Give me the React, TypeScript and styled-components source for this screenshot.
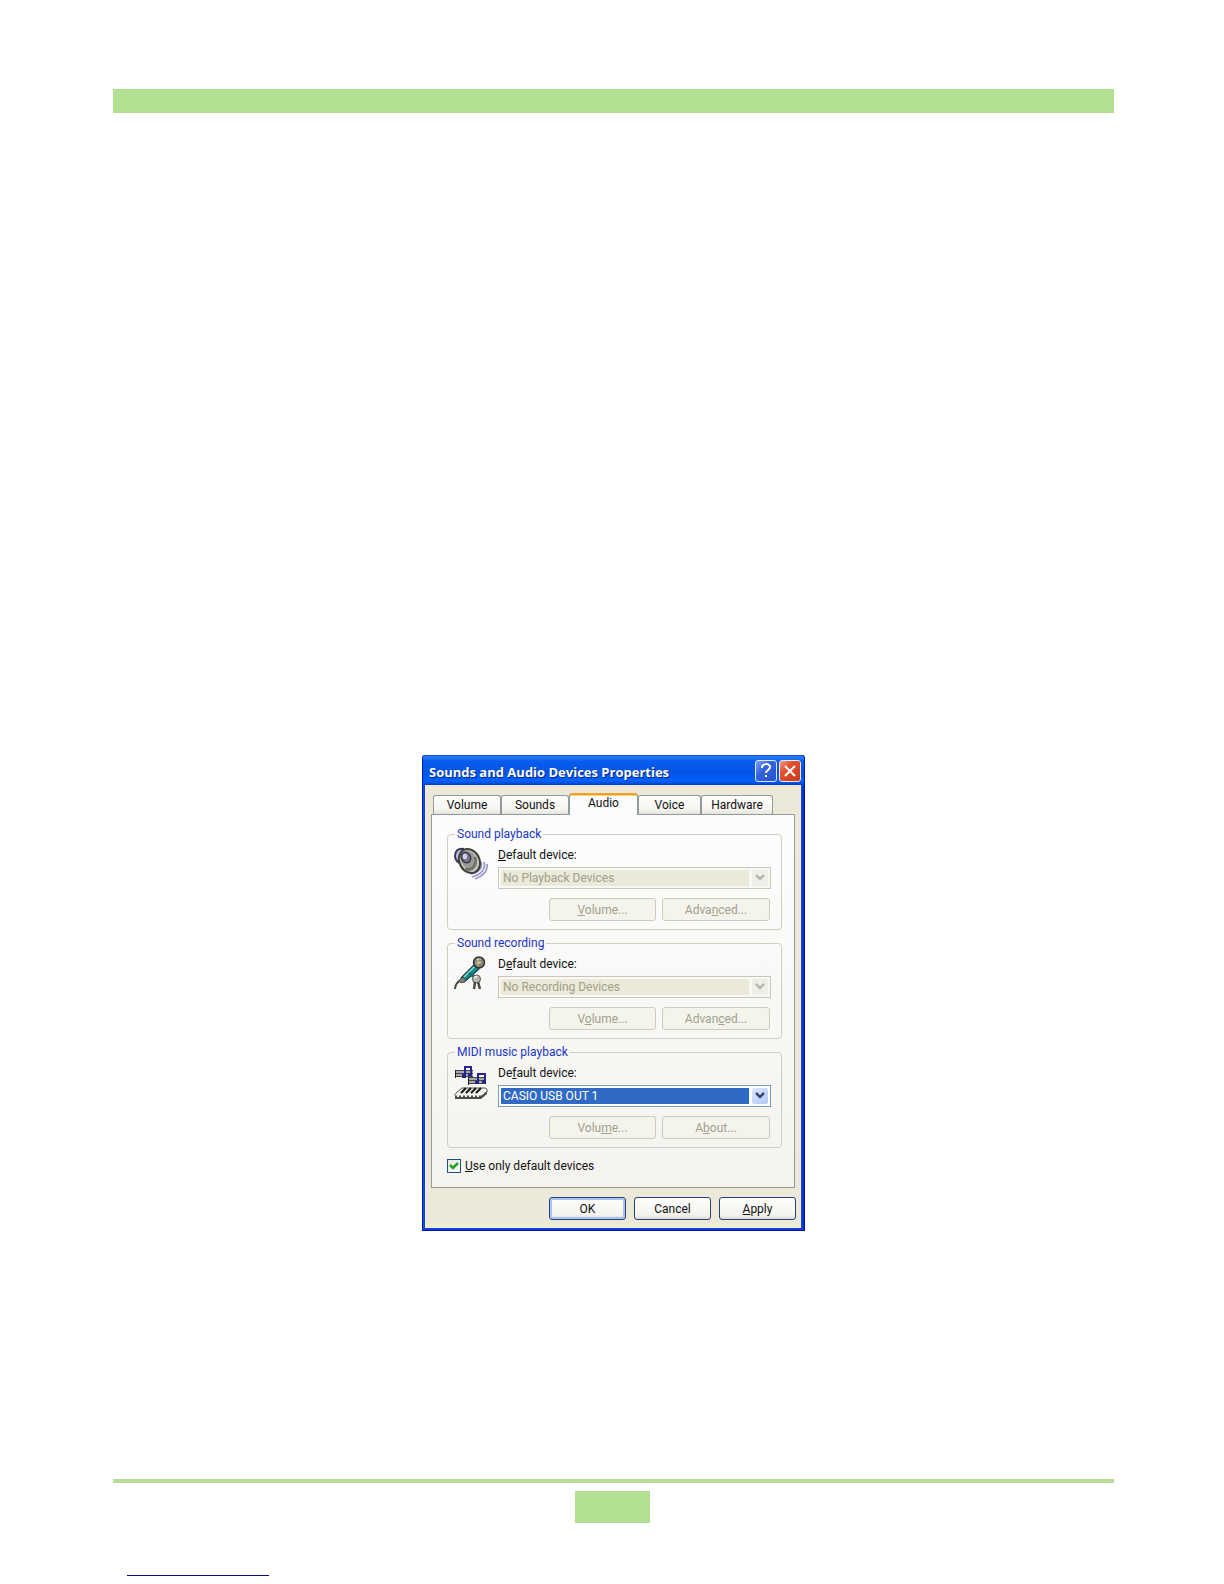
import React, { useState } from "react";
import styled, { createGlobalStyle, css } from "styled-components";

const GlobalStyle = createGlobalStyle`
  *, *::before, *::after { box-sizing: border-box; }
  body {
    margin: 0;
    background: #fff;
    color: #111;
    font: 12px/16px Roboto, "Liberation Sans", Arial, sans-serif;
  }
  button, select, input { font: inherit; }
`;

const Page = styled.div`
  min-height: 100vh;
  display: flex;
  flex-direction: column;
  padding: 89px 110px 8px 113px;
`;

const HeaderBand = styled.header`
  height: 24px;
  background: #b2e093;
`;

const Content = styled.main`
  flex: 1;
  display: flex;
  justify-content: center;
  align-items: flex-start;
  padding: 642px 0 248px;
`;

const Footer = styled.footer`
  display: flex;
  flex-direction: column;
  align-items: center;
  border-top: 4px solid #b9dd97;
  padding: 8px 2px 0 0;
`;

const PageNumber = styled.div`
  width: 75px;
  height: 32px;
  background: #b2e093;
`;

const FooterLink = styled.a`
  align-self: flex-start;
  width: 142px;
  height: 17px;
  margin: 36px 0 0 14px;
  border-bottom: 1px solid #0c0c86;
`;

const Dialog = styled.section`
  width: 383px;
  border: solid #0019a8;
  border-width: 0 1px 1px;
  border-radius: 3px 3px 0 0;
  background: #0a3fdc;
  box-shadow: inset 1px 0 #1550e8, inset -1px 0 #0a2bc0;
`;

const TitleBar = styled.header`
  height: 30px;
  display: flex;
  align-items: center;
  gap: 2px;
  padding: 2px 3px 0 6px;
  border-radius: 3px 3px 0 0;
  background: linear-gradient(#0a50d0 0, #2b80ff 2px, #0a5cf0 6px, #0054e3 18px, #0561fa 26px, #003fc4 30px);
`;

const Title = styled.h1`
  flex: 1;
  margin: 0;
  padding-top: 2px;
  color: #fff;
  font: 700 13px/20px "Open Sans", "Noto Sans", sans-serif;
  text-shadow: 1px 1px #0a2a8a;
  white-space: nowrap;
`;

const CaptionButton = styled.button<{ $close?: boolean }>`
  width: 22px;
  height: 22px;
  display: grid;
  place-items: center;
  padding: 0;
  border: 1px solid #dfe8fb;
  border-radius: 3px;
  background: ${(p) =>
    p.$close
      ? "linear-gradient(135deg, #f0a088, #e0512d 35%, #c83a16)"
      : "linear-gradient(135deg, #7ea2f2, #3464dc 40%, #2450cc)"};
`;

const DialogBody = styled.div`
  margin: 0 3px 2px 2px;
  padding: 8px 5px 7px;
  border: 1px solid #f5f1dc;
  border-top: 0;
  background: #ece9d8;
`;

const TabList = styled.div`
  height: 21px;
  display: flex;
  align-items: flex-end;
  padding-left: 2px;
`;

const Tab = styled.button<{ $width: number; $active?: boolean }>`
  width: ${(p) => p.$width}px;
  height: 19px;
  padding: 0;
  border: 1px solid #919b9c;
  border-bottom: 0;
  border-radius: 3px 3px 0 0;
  background: linear-gradient(#fff, #f6f5f0 70%, #e6e5dc);
  color: #111;
  line-height: 18px;
  ${(p) =>
    p.$active &&
    css`
      height: 22px;
      margin-bottom: -1px;
      padding-bottom: 4px;
      border-top: 2px solid #efa02c;
      background: linear-gradient(#ffd070 1px, #fcfcfe 1px);
      line-height: 16px;
    `}
`;

const Panel = styled.div`
  height: 374px;
  padding: 12px 12px 13px 15px;
  border: 1px solid #919b9c;
  background: linear-gradient(#fdfdfe, #f4f3ee);
`;

const Groups = styled.div`
  display: grid;
  gap: 6px;
`;

const Group = styled.fieldset`
  min-width: 0;
  height: 103px;
  margin: 0;
  padding: 0 10px 0 6px;
  border: 1px solid #cfcfc0;
  border-radius: 4px;
`;

const GroupTitle = styled.legend`
  margin-left: 1px;
  padding: 0 2px;
  color: #1a35c8;
  line-height: 14px;
`;

const GroupContent = styled.div`
  display: grid;
  grid-template-columns: 34px 1fr;
  column-gap: 10px;
  padding-top: 6px;
`;

const Fields = styled.div`
  display: flex;
  flex-direction: column;
`;

const FieldLabel = styled.label`
  margin-bottom: 4px;
`;

const Combo = styled.div<{ $disabled: boolean }>`
  height: 22px;
  display: flex;
  gap: 3px;
  padding: 2px;
  border: 1px solid ${(p) => (p.$disabled ? "#c9c7ba" : "#7f9db9")};
  background: ${(p) => (p.$disabled ? "#f8f8f4" : "#fff")};
`;

const ComboSelect = styled.select`
  flex: 1;
  min-width: 0;
  height: 16px;
  padding: 0 2px;
  border: 0;
  border-radius: 0;
  outline: 0;
  appearance: none;
  background: #316ac5;
  color: #fff;
  line-height: 16px;
  &:disabled {
    background: #ebe9d8;
    color: #a19f8d;
    opacity: 1;
  }
`;

const ComboArrow = styled.span<{ $disabled: boolean }>`
  width: 16px;
  display: grid;
  place-items: center;
  border-radius: 2px;
  color: ${(p) => (p.$disabled ? "#b9b8ae" : "#3a4a72")};
  background: ${(p) => (p.$disabled ? "#efeee8" : "linear-gradient(135deg, #dde7fd, #b3c8f6)")};
`;

const ButtonRow = styled.div`
  display: grid;
  grid-template-columns: 107px 108px;
  justify-content: end;
  gap: 6px;
  margin: 9px 1px 0 0;
`;

const PushButton = styled.button<{ $primary?: boolean }>`
  height: 23px;
  padding: 0;
  border: 1px solid #24437c;
  border-radius: 3px;
  background: linear-gradient(#fff, #f4f3ee 80%, #dedbd0);
  color: #111;
  line-height: 18px;
  box-shadow: ${(p) => (p.$primary ? "inset 0 0 0 2px #a9c3f0" : "none")};
  &:disabled {
    border-color: #cdcbbd;
    background: #f5f4ec;
    color: #a19f8d;
  }
`;

const CheckRow = styled.label`
  display: flex;
  align-items: center;
  gap: 4px;
  margin-top: 10px;
`;

const CheckMark = styled.span`
  display: grid;
  width: 14px;
  height: 14px;
  > * { grid-area: 1 / 1; }
  svg { pointer-events: none; }
`;

const CheckInput = styled.input`
  appearance: none;
  width: 14px;
  height: 14px;
  margin: 0;
  border: 1px solid #1c5180;
  background: linear-gradient(135deg, #e4e4dc, #fff);
  &:not(:checked) + svg { visibility: hidden; }
`;

const Actions = styled.div`
  display: grid;
  grid-template-columns: repeat(3, 77px);
  justify-content: end;
  gap: 8px;
  margin: 9px -1px 0 0;
`;

function SpeakerIcon() {
  return (
    <svg width="34" height="34" viewBox="0 0 34 34" aria-hidden="true">
      <path d="M27 15c2 6-2 10-10 12M30 15c2 7-2 12-12 15M33 17c1 7-4 12-12 15" fill="none" stroke="#9f9dc8" strokeWidth="1.8" />
      <path d="M10 2C4 1 1 4 1 9c0 4 3 7 6 7" fill="#c2c1d0" stroke="#34345c" strokeWidth="2" />
      <ellipse cx="15.5" cy="14" rx="10" ry="12.5" transform="rotate(-28 15.5 14)" fill="#c6c5bb" stroke="#3e3e3a" strokeWidth="2" />
      <ellipse cx="14.5" cy="12.5" rx="7.5" ry="9.5" transform="rotate(-28 14.5 12.500)" fill="#9d9c96" />
      <path d="M11 22c8 2 12-4 10-12" fill="none" stroke="#74736d" strokeWidth="3" />
      <ellipse cx="12" cy="10.500" rx="4.500" ry="5.500" transform="rotate(-28 12 10.500)" fill="#77768c" stroke="#3a3948" strokeWidth="1.5" />
      <ellipse cx="11" cy="9.500" rx="2.200" ry="2.800" fill="#d2d1e6" />
    </svg>
  );
}

function MicrophoneIcon() {
  return (
    <svg width="34" height="34" viewBox="0 0 34 34" aria-hidden="true">
      <path d="M1 33c0-5 3-8 8-10" fill="none" stroke="#44443f" strokeWidth="2" />
      <path d="M7 22l14-14 4 5-15 13z" fill="#168f8d" stroke="#153c3f" strokeWidth="1.2" />
      <path d="M10 21L21 10" stroke="#82e2dc" strokeWidth="1.5" />
      <path d="M5 25l4-4 3 4-5 2z" fill="#85857c" stroke="#4d4d48" />
      <circle cx="25" cy="6.500" r="5.500" fill="#858277" stroke="#34322f" strokeWidth="1.5" />
      <path d="M22 4l5-1M22 7l6-1M24 2v8" stroke="#c6c4b4" />
      <path d="M25 5l2 2-3 1z" fill="#e8d641" />
      <path d="M15 17l4 3 4 1" fill="none" stroke="#15716f" strokeWidth="3" />
      <circle cx="22.500" cy="23" r="4" fill="#b8b7af" stroke="#5b5a55" />
      <path d="M21 26l-1 7M24 26l2 7" stroke="#4b4a46" strokeWidth="2.500" />
      <path d="M20 22l3-2" stroke="#fff" strokeWidth="1.5" />
    </svg>
  );
}

function MidiIcon() {
  return (
    <svg width="34" height="34" viewBox="0 0 34 34" aria-hidden="true">
      <path d="M1 5h18v7H1zM14 12h18v6H14z" fill="#a9a9ac" />
      <path d="M1 5.500h18M1 8.500h18M1 11.500h18M14 12.500h18M14 15.500h18M14 18.500h18" stroke="#45454c" />
      <path d="M1.500 5v8M14.500 12v8M31.500 12v7" stroke="#222" />
      <path d="M11 11V2h6v7M24 17V9h7v7" fill="none" stroke="#25238e" strokeWidth="2" />
      <path d="M8 9h4v4H8zM14 8h4v3h-4zM21 16h4v3h-4zM28 15h4v3h-4z" fill="#25238e" />
      <path d="M8 23h22c3 0 4 2 3 4l-5 4H2c-2 0-1-2 0-3z" fill="#f4f4f0" stroke="#55554f" />
      <path d="M1 31h26l6-5v3l-6 5H1z" fill="#4c4c46" />
      <path d="M12 23l-5 5M17 23l-5 5M22 23l-5 5M27 23l-5 5" stroke="#1d1d1b" strokeWidth="2.200" />
      <path d="M4 30v2M8 30v2M12 30v2M16 30v2M20 30v2M24 30v2" stroke="#f2f2ec" strokeWidth="2" />
    </svg>
  );
}

function Mnemonic({ text, at }: { text: string; at: number }) {
  return (
    <>
      {text.slice(0, at)}
      <u>{text[at]}</u>
      {text.slice(at + 1)}
    </>
  );
}

interface DeviceGroupProps {
  id: string;
  title: string;
  icon: React.ReactNode;
  labelKey: number;
  device: string;
  enabled?: boolean;
  volumeKey: number;
  second: string;
  secondKey: number;
}

function DeviceGroup({ id, title, icon, labelKey, device, enabled = false, volumeKey, second, secondKey }: DeviceGroupProps) {
  return (
    <Group>
      <GroupTitle>{title}</GroupTitle>
      <GroupContent>
        {icon}
        <Fields>
          <FieldLabel htmlFor={id}>
            <Mnemonic text="Default device:" at={labelKey} />
          </FieldLabel>
          <Combo $disabled={!enabled}>
            <ComboSelect id={id} disabled={!enabled}>
              <option>{device}</option>
            </ComboSelect>
            <ComboArrow $disabled={!enabled}>
              <svg width="10" height="8" viewBox="0 0 10 8" aria-hidden="true">
                <path d="M1 1l4 4 4-4" fill="none" stroke="currentColor" strokeWidth="2.5" />
              </svg>
            </ComboArrow>
          </Combo>
          <ButtonRow>
            <PushButton disabled>
              <Mnemonic text="Volume..." at={volumeKey} />
            </PushButton>
            <PushButton disabled>
              <Mnemonic text={second} at={secondKey} />
            </PushButton>
          </ButtonRow>
        </Fields>
      </GroupContent>
    </Group>
  );
}

const TABS = [
  { name: "Volume", width: 68 },
  { name: "Sounds", width: 68 },
  { name: "Audio", width: 69 },
  { name: "Voice", width: 63 },
  { name: "Hardware", width: 72 },
];

export default function App() {
  const [onlyDefault, setOnlyDefault] = useState(true);
  return (
    <>
      <GlobalStyle />
      <Page>
        <HeaderBand />
        <Content>
          <Dialog role="dialog" aria-labelledby="dialog-title">
            <TitleBar>
              <Title id="dialog-title">Sounds and Audio Devices Properties</Title>
              <CaptionButton aria-label="Help">
                <svg width="14" height="16" viewBox="0 0 14 16" aria-hidden="true">
                  <path d="M3 5c0-5 8-5 8-1 0 3-4 3-4 6M7 12v2" fill="none" stroke="#fff" strokeWidth="2" />
                </svg>
              </CaptionButton>
              <CaptionButton $close aria-label="Close">
                <svg width="14" height="14" viewBox="0 0 14 14" aria-hidden="true">
                  <path d="M2 2l10 10M12 2L2 12" stroke="#fff" strokeWidth="2" />
                </svg>
              </CaptionButton>
            </TitleBar>
            <DialogBody>
              <TabList role="tablist">
                {TABS.map((t) => (
                  <Tab key={t.name} role="tab" aria-selected={t.name === "Audio"} $width={t.width} $active={t.name === "Audio"}>
                    {t.name}
                  </Tab>
                ))}
              </TabList>
              <Panel role="tabpanel">
                <Groups>
                  <DeviceGroup id="playback" title="Sound playback" icon={<SpeakerIcon />} labelKey={0} device="No Playback Devices" volumeKey={0} second="Advanced..." secondKey={4} />
                  <DeviceGroup id="recording" title="Sound recording" icon={<MicrophoneIcon />} labelKey={1} device="No Recording Devices" volumeKey={1} second="Advanced..." secondKey={5} />
                  <DeviceGroup id="midi" title="MIDI music playback" icon={<MidiIcon />} labelKey={2} device="CASIO USB OUT 1" enabled volumeKey={4} second="About..." secondKey={1} />
                </Groups>
                <CheckRow>
                  <CheckMark>
                    <CheckInput type="checkbox" checked={onlyDefault} onChange={(e) => setOnlyDefault(e.target.checked)} />
                    <svg width="14" height="14" viewBox="0 0 14 14" aria-hidden="true">
                      <path d="M3 6l3 3 5-5" fill="none" stroke="#21a121" strokeWidth="2.5" />
                    </svg>
                  </CheckMark>
                  <span>
                    <Mnemonic text="Use only default devices" at={0} />
                  </span>
                </CheckRow>
              </Panel>
              <Actions>
                <PushButton $primary>OK</PushButton>
                <PushButton>Cancel</PushButton>
                <PushButton>
                  <Mnemonic text="Apply" at={0} />
                </PushButton>
              </Actions>
            </DialogBody>
          </Dialog>
        </Content>
        <Footer>
          <PageNumber />
          <FooterLink href="#top" aria-label="Back to top" />
        </Footer>
      </Page>
    </>
  );
}
